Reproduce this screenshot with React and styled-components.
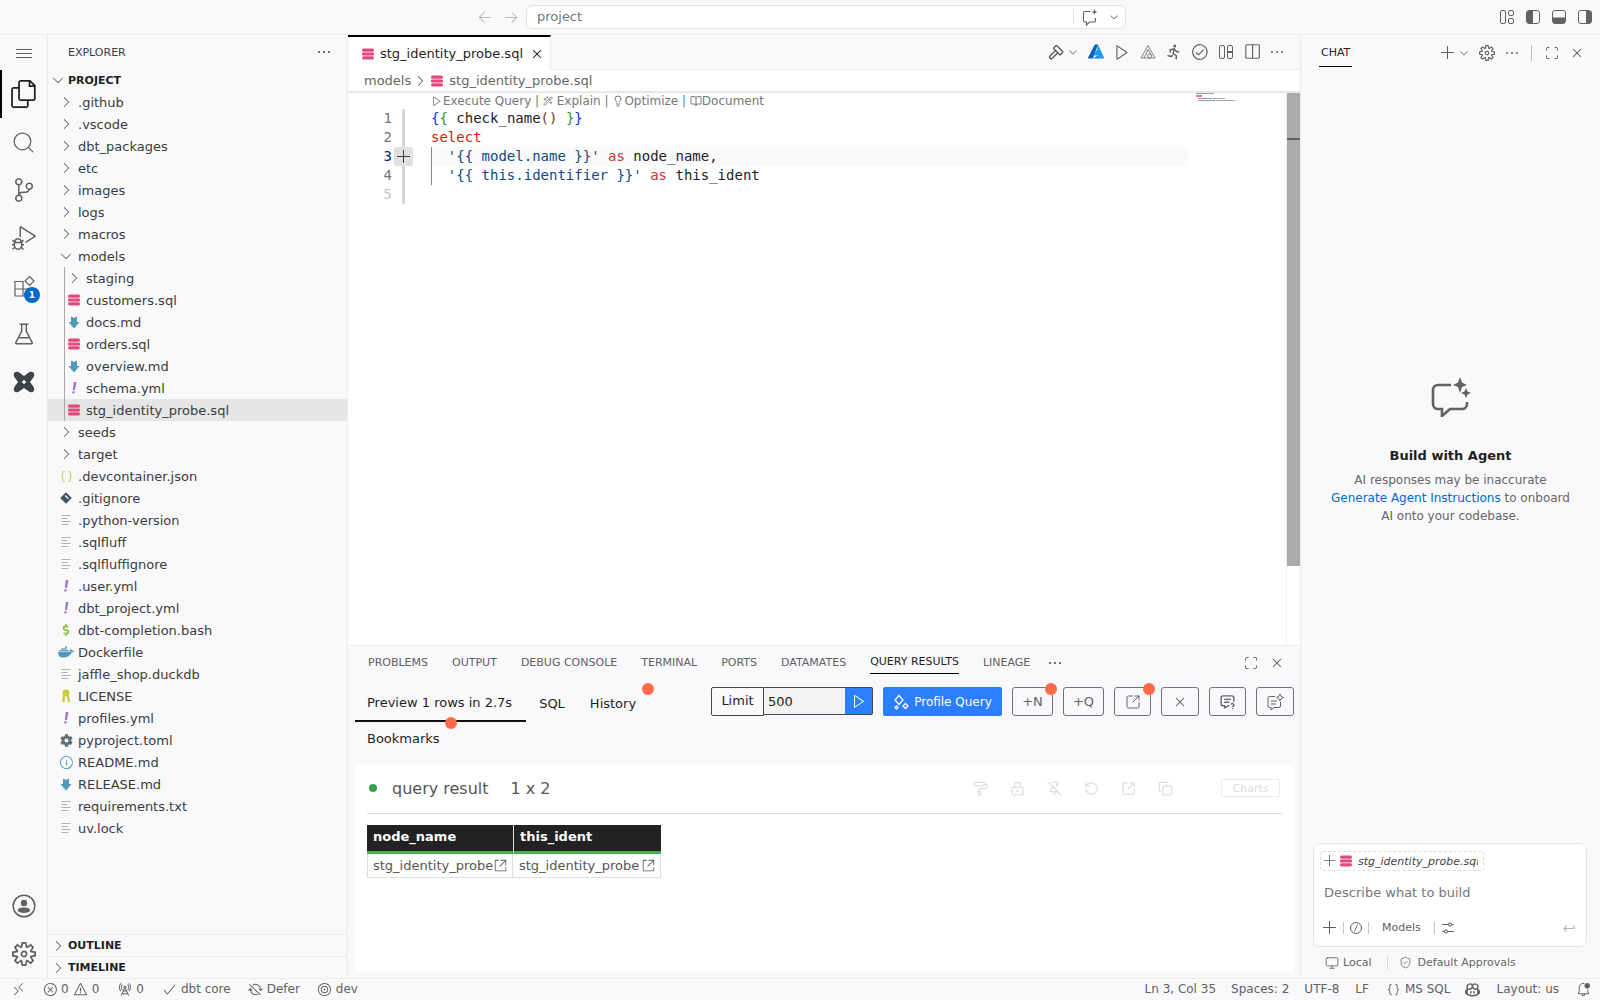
import styled, { createGlobalStyle } from "styled-components";
import {
  VscAdd, VscArrowLeft, VscArrowRight, VscBeaker, VscBellDot, VscCheck,
  VscChevronDown, VscChevronRight, VscClose, VscCopilot, VscDebugAlt, VscEllipsis, VscError,
  VscFiles, VscInfo, VscJson, VscMenu, VscNewline, VscPass, VscPlay, VscRadioTower, VscRemote,
  VscSettings, VscSettingsGear, VscSourceControl, VscSplitHorizontal, VscSyncIgnored, VscTarget, VscWarning,
  VscLinkExternal,
} from "react-icons/vsc";
import { FaCog, FaDocker, FaDollarSign } from "react-icons/fa";
import { TbRun, TbHammer, TbMessageQuestion } from "react-icons/tb";
import {
  BookOpen, Copy, Lightbulb, LockKeyhole, Monitor, PaintRoller, PinOff, RotateCcw, Search, ShieldCheck,
  SquareArrowOutUpRight, Wand2,
} from "lucide-react";

const Global = createGlobalStyle`
  html, body { margin: 0; height: 100%; background: #f9f9fc; }
  #root { height: 1000px; }
  * { box-sizing: border-box; }
  body { font-family: "DejaVu Sans", sans-serif; color: #3b3b3b; overflow: hidden; }
`;

const Shell = styled.div`
  display: flex;
  flex-direction: column;
  width: 1600px;
  height: 1000px;
`;

const TitleBar = styled.div`
  height: 35px;
  flex: none;
  display: flex;
  align-items: center;
  padding-left: 477px;
  border-bottom: 1px solid #ececf0;
`;

const NavArrows = styled.div`
  display: flex;
  gap: 10px;
  width: 49px;
  color: #b9b9bd;
  font-size: 16px;
  align-items: center;
`;

const CommandBox = styled.div`
  width: 600px;
  height: 24px;
  display: flex;
  align-items: center;
  padding: 0 0 1px 10px;
  background: #fff;
  border: 1px solid #e2e2e6;
  border-radius: 6px;
  font-size: 13px;
  color: #767676;
`;

const CommandActions = styled.div`
  margin-left: auto;
  display: flex;
  align-items: center;
  height: 16px;
  width: 52px;
  gap: 9px;
  border-left: 1px solid #e2e2e6;
  padding-left: 7px;
  color: #616161;
`;

const LayoutIcons = styled.div`
  margin-left: auto;
  display: flex;
  gap: 12px;
  padding-right: 8px;
  color: #616161;
`;

const Main = styled.div`
  flex: 1;
  display: flex;
  min-height: 0;
`;

const Activity = styled.nav`
  width: 48px;
  flex: none;
  display: flex;
  flex-direction: column;
  border-right: 1px solid #ececf0;
`;

const ActivityItem = styled.div`
  height: ${(p) => p.$h || 48}px;
  display: flex;
  align-items: center;
  justify-content: center;
  color: ${(p) => (p.$active ? "#1f1f1f" : "#616161")};
  font-size: ${(p) => p.$size || 24}px;
  position: relative;
  border-left: ${(p) => (p.$active ? "2px solid #000" : "none")};
  padding-right: ${(p) => (p.$active ? "2px" : "0")};
`;

const Spacer = styled.div`
  flex: 1;
`;

const Badge = styled.span`
  position: absolute;
  left: 24px;
  top: 25px;
  width: 16px;
  height: 16px;
  border-radius: 50%;
  background: #0069cc;
  color: #fff;
  font-size: 9px;
  font-weight: 700;
  display: flex;
  align-items: center;
  justify-content: center;
`;

const Sidebar = styled.aside`
  width: 300px;
  flex: none;
  display: flex;
  flex-direction: column;
  border-right: 1px solid #ececf0;
`;

const SideHead = styled.div`
  height: 34px;
  flex: none;
  display: flex;
  align-items: center;
  justify-content: space-between;
  padding: 0 15px 0 20px;
  font-size: 11px;
  color: #3b3b3b;
  svg { font-size: 16px; color: #444; }
`;

const Tree = styled.div`
  flex: 1;
`;

const Row = styled.div`
  height: 22px;
  display: flex;
  align-items: center;
  gap: 4px;
  padding-left: ${(p) => (p.$depth === 2 ? 18 : 10)}px;
  font-size: 13px;
  color: #3b3b3b;
  background: ${(p) => (p.$selected ? "#e6e6e6" : "transparent")};
`;

const RootRow = styled(Row)`
  padding-left: 2px;
  gap: 2px;
  font-size: 11px;
  font-weight: 700;
  color: #1f1f1f;
`;

const Nested = styled.div`
  position: relative;
  &::before {
    content: "";
    position: absolute;
    z-index: 1;
    left: 16px;
    top: 0;
    bottom: 0;
    width: 1px;
    background: #a8a8a8;
  }
`;

const IconBox = styled.span`
  width: 16px;
  height: 16px;
  flex: none;
  display: inline-flex;
  align-items: center;
  justify-content: center;
  color: ${(p) => p.$color || "#616161"};
  font-size: ${(p) => p.$size || 16}px;
`;

const Section = styled(RootRow)`
  border-top: 1px solid #ececf0;
  flex: none;
`;

const Center = styled.div`
  flex: 1;
  min-width: 0;
  display: flex;
  flex-direction: column;
`;

const TabBar = styled.div`
  height: 35px;
  flex: none;
  display: flex;
  align-items: stretch;
  justify-content: space-between;
  border-bottom: 1px solid #ececf0;
`;

const EditorTab = styled.div`
  width: 203px;
  display: flex;
  align-items: center;
  gap: 4px;
  padding-left: 12px;
  background: #fff;
  border-top: 2px solid #000;
  border-right: 1px solid #ececf0;
  margin-bottom: -1px;
  font-size: 13px;
  color: #1f1f1f;
  > svg { margin-left: 2px; font-size: 16px; }
`;

const EditorActions = styled.div`
  display: flex;
  align-items: center;
  gap: 8px;
  padding-right: 15px;
  color: #616161;
  font-size: 18px;
`;

const Crumbs = styled.div`
  height: 23px;
  flex: none;
  display: flex;
  align-items: center;
  padding-left: 16px;
  gap: 1px;
  background: #fff;
  border-bottom: 2px solid #e8e8e8;
  font-size: 13px;
  color: #666;
`;

const CrumbIcon = styled(IconBox)`
  margin: 0 3px 0 0;
`;

const EditorArea = styled.div`
  flex: 1;
  min-height: 0;
  display: flex;
  background: #fff;
`;

const CodeColumn = styled.div`
  width: 840px;
  flex: none;
`;

const Lens = styled.div`
  height: 16px;
  display: flex;
  align-items: center;
  padding-left: 83px;
  font-size: 12px;
  color: #777;
  white-space: pre;
`;

const Line = styled.div`
  height: 19px;
  display: flex;
  align-items: stretch;
`;

const LineNo = styled.div`
  width: 44px;
  text-align: right;
  font: 14px/19px "DejaVu Sans Mono", monospace;
  color: ${(p) => (p.$active ? "#0b216f" : p.$dim ? "#c4c4c4" : "#6e7681")};
`;

const Glyph = styled.div`
  width: 19px;
  margin-left: 2px;
  position: relative;
  flex: none;
  display: flex;
  align-items: center;
  justify-content: center;
  &::before {
    content: "";
    position: absolute;
    left: 8px;
    top: 0;
    bottom: 0;
    width: 3px;
    background: #d6d6d6;
  }
`;

const AddBox = styled.span`
  position: relative;
  width: 19px;
  height: 19px;
  border-radius: 3px;
  background: #e0e0e0;
  color: #3b3b3b;
  display: flex;
  align-items: center;
  justify-content: center;
  font-size: 16px;
`;

const Code = styled.div`
  flex: 1;
  padding-left: ${(p) => (p.$guide ? 0 : 18)}px;
  margin-left: ${(p) => (p.$guide ? 18 : 0)}px;
  box-shadow: ${(p) => (p.$guide ? "inset 1px 0 0 #8a8a8a" : "none")};
  background: ${(p) => (p.$active ? "#fafafa" : "transparent")};
  font: 14px/19px "DejaVu Sans Mono", monospace;
  color: #1f1f1f;
  white-space: pre;
`;

const Tok = styled.span`
  color: ${(p) => p.$c};
`;

const Minimap = styled.div`
  width: 98px;
  flex: none;
  padding: 0 0 0 7px;
  svg { display: block; }
`;

const Scroll = styled.div`
  width: 14px;
  flex: none;
  align-self: stretch;
  display: flex;
  flex-direction: column;
  background: #fff;
  border-left: 1px solid #f0f0f0;
`;

const Thumb = styled.div`
  height: 473px;
  background: #ababab;
  padding-top: 45px;
  &::before {
    content: "";
    display: block;
    height: 2px;
    background: #606060;
  }
`;

const Panel = styled.section`
  height: 333px;
  flex: none;
  display: flex;
  flex-direction: column;
  border-top: 1px solid #ececf0;
`;

const PanelTabs = styled.div`
  height: 29px;
  flex: none;
  display: flex;
  align-items: stretch;
  gap: 24px;
  padding: 0 15px 0 20px;
  font-size: 11px;
  color: #616161;
`;

const PanelTab = styled.div`
  display: flex;
  align-items: center;
  height: 28px;
  padding-top: 4px;
  color: ${(p) => (p.$active ? "#1f1f1f" : "#616161")};
  border-bottom: ${(p) => (p.$active ? "1px solid #000" : "none")};
`;

const PanelActions = styled.div`
  margin-left: auto;
  display: flex;
  align-items: center;
  padding-top: 4px;
  gap: 10px;
  font-size: 16px;
  color: #616161;
`;

const PanelMore = styled.div`
  display: flex;
  align-items: center;
  padding-top: 4px;
  margin-left: -7px;
  font-size: 16px;
  color: #444;
`;

const QueryHead = styled.div`
  height: 90px;
  flex: none;
  display: flex;
  justify-content: space-between;
  padding: 9px 6px 0 7px;
`;

const QueryTabs = styled.div`
  width: 320px;
  display: flex;
  flex-wrap: wrap;
  align-content: flex-start;
`;

const QueryTab = styled.div`
  position: relative;
  height: ${(p) => (p.$wrap ? 32 : 38)}px;
  padding: 0 ${(p) => (p.$active ? 14 : 12)}px 0 12px;
  margin-right: 1px;
  display: flex;
  align-items: center;
  font-size: 13px;
  color: #1f1f1f;
  border-bottom: ${(p) => (p.$active ? "2px solid #111" : "none")};
`;

const Dot = styled.span`
  position: absolute;
  z-index: 2;
  width: 12px;
  height: 12px;
  border-radius: 50%;
  background: #ff6b4a;
  left: ${(p) => p.$left};
  right: ${(p) => p.$right};
  top: ${(p) => p.$top};
  bottom: ${(p) => p.$bottom};
`;

const QueryTools = styled.div`
  display: flex;
  align-items: flex-start;
  gap: 10px;
  margin-top: 3px;
`;

const LimitGroup = styled.div`
  display: flex;
  height: 29px;
  margin-right: 0;
`;

const LimitLabel = styled.div`
  width: 53px;
  height: 29px;
  display: flex;
  align-items: center;
  justify-content: center;
  padding-bottom: 2px;
  font-size: 13px;
  color: #1f1f1f;
  background: #fafafa;
  border: 1px solid #45494e;
  border-radius: 2px 0 0 2px;
`;

const LimitInput = styled.div`
  width: 81px;
  height: 28px;
  display: flex;
  align-items: center;
  padding-left: 4px;
  font-size: 13px;
  color: #222;
  background: #f3f3f5;
  border: 1px solid #45494e;
  border-left: none;
  border-right: none;
`;

const RunButton = styled.div`
  width: 28px;
  height: 28px;
  display: flex;
  align-items: center;
  justify-content: center;
  background: #2b7fff;
  color: #fff;
  font-size: 16px;
  border: 1px solid #45494e;
  border-left: none;
  border-radius: 0 2px 2px 0;
`;

const ProfileButton = styled.div`
  width: 119px;
  height: 29px;
  display: flex;
  align-items: center;
  justify-content: center;
  gap: 5px;
  background: #2b7fff;
  color: #fff;
  font-size: 12px;
  border-radius: 2px;
`;

const ToolButton = styled.div`
  position: relative;
  width: ${(p) => p.$w}px;
  height: 29px;
  display: flex;
  align-items: center;
  justify-content: center;
  border: 1px solid #6f747a;
  border-radius: 3px;
  font-size: 13px;
  color: #5e646a;
`;

const Card = styled.div`
  flex: 1;
  min-height: 0;
  margin: 0 6px 6px 7px;
  padding: 0 12px;
  background: #fff;
`;

const CardHead = styled.div`
  height: 49px;
  display: flex;
  align-items: center;
  border-bottom: 1px solid #dcdcdc;
  padding-bottom: 2px;
`;

const StatusDot = styled.span`
  width: 8px;
  height: 8px;
  margin-left: 2px;
  border-radius: 50%;
  background: #2ea24f;
`;

const CardTitle = styled.span`
  margin-left: 15px;
  font-size: 16px;
  color: #555;
`;

const CardCount = styled.span`
  margin-left: 22px;
  font-size: 16px;
  color: #555;
`;

const CardTools = styled.div`
  margin-left: auto;
  display: flex;
  align-items: center;
  gap: 22px;
  color: #dedede;
`;

const ChartsButton = styled.div`
  width: 59px;
  height: 18px;
  margin-left: 48px;
  margin-right: 2px;
  display: flex;
  align-items: center;
  justify-content: center;
  border: 1px solid #ececec;
  border-radius: 2px;
  font-size: 11px;
  color: #dcdcdc;
`;

const Table = styled.div`
  display: grid;
  grid-template-columns: 146px 148px;
  width: 294px;
  margin-top: 11px;
`;

const HeadCell = styled.div`
  height: 29px;
  display: flex;
  align-items: center;
  padding: 0 0 3px 6px;
  background: #222;
  color: #fff;
  font-size: 13px;
  font-weight: 700;
  border-bottom: 3px solid #4caf50;
  border-left: ${(p) => (p.$next ? "1px solid #ddd" : "none")};
`;

const BodyCell = styled.div`
  height: 24px;
  display: flex;
  align-items: center;
  gap: ${(p) => (p.$next ? 3 : 1)}px;
  padding-left: ${(p) => (p.$next ? 6 : 5)}px;
  font-size: 13px;
  color: #555;
  border: 1px solid #ddd;
  border-top: none;
  border-left: ${(p) => (p.$next ? "none" : "1px solid #ddd")};
`;

const Chat = styled.aside`
  width: 300px;
  flex: none;
  display: flex;
  flex-direction: column;
  border-left: 1px solid #ececf0;
`;

const ChatHead = styled.div`
  height: 35px;
  flex: none;
  display: flex;
  align-items: center;
  padding: 0 15px 0 18px;
  color: #616161;
  font-size: 16px;
`;

const ChatTitle = styled.div`
  height: 27px;
  padding: 6px 2px 0;
  margin-top: 1px;
  border-bottom: 1px solid #000;
  font-size: 11px;
  color: #1f1f1f;
`;

const ChatActions = styled.div`
  margin-left: auto;
  display: flex;
  align-items: center;
  gap: 9px;
`;

const ChatRule = styled.span`
  width: 1px;
  height: 16px;
  margin: 0 3px 0 2px;
  background: #bdbdbd;
`;

const EmptyState = styled.div`
  flex: 1;
  display: flex;
  flex-direction: column;
  align-items: center;
  justify-content: center;
  padding-bottom: 11px;
  font-size: 12px;
  line-height: 18px;
  color: #666;
  text-align: center;
`;

const EmptyTitle = styled.div`
  margin: 30px 0 6px;
  font-size: 13px;
  font-weight: 700;
  color: #1f1f1f;
`;

const Link = styled.span`
  color: #0069cc;
`;

const InputBox = styled.div`
  height: 104px;
  margin: 0 13px 0 12px;
  flex: none;
  display: flex;
  flex-direction: column;
  padding: 7px 6px 0;
  background: #fff;
  border: 1px solid #e6e6ea;
  border-radius: 7px;
`;

const Chip = styled.div`
  width: 164px;
  height: 20px;
  display: flex;
  align-items: center;
  padding-left: 1px;
  border: 1px dashed #dcdcdc;
  border-radius: 3px;
  font-size: 11px;
  font-style: italic;
  color: #444;
  overflow: hidden;
  white-space: nowrap;
`;

const ChipName = styled.span`
  margin-left: 4px;
  width: 120px;
  overflow: hidden;
`;

const Placeholder = styled.div`
  margin: 14px 0 0 4px;
  font-size: 13px;
  color: #777;
`;

const InputFoot = styled.div`
  margin-top: auto;
  height: 34px;
  padding: 0 0 3px 2px;
  display: flex;
  align-items: center;
  gap: 3px;
  font-size: 11px;
  color: #616161;
`;

const ModelsLabel = styled.span`
  margin: 0 8px;
`;

const Bar = styled.span`
  width: 1px;
  height: 12px;
  margin: 0 ${(p) => p.$gap ?? 2}px;
  background: #c9c9c9;
`;

const ReturnIcon = styled.span`
  margin-left: auto;
  display: flex;
  font-size: 18px;
  color: #b5b5b5;
  margin-right: 2px;
`;

const ChatFoot = styled.div`
  height: 31px;
  flex: none;
  display: flex;
  align-items: center;
  padding: 0 0 0 24px;
  font-size: 11px;
  color: #666;
  svg { color: #666; flex: none; }
`;

const FootLabel = styled.span`
  margin-left: ${(p) => p.$ml || 4}px;
`;

const FootRule = styled.span`
  width: 1px;
  height: 14px;
  margin: 0 11px 0 15px;
  background: #d8d8d8;
`;

const StatusBar = styled.footer`
  height: 22px;
  flex: none;
  display: flex;
  align-items: center;
  padding: 0 9px 1px 11px;
  border-top: 1px solid #ececf0;
  font-size: 12px;
  color: #616161;
`;

const StatusItem = styled.span`
  display: inline-flex;
  align-items: center;
  gap: ${(p) => p.$gap ?? 4}px;
  margin-left: ${(p) => p.$ml || 0}px;
  svg { font-size: 15px; flex: none; }
`;

const DbIcon = () => (
  <svg width="16" height="16" viewBox="0 0 16 16" fill="#e5487c">
    <rect x="2" y="2.6" width="12" height="3.2" rx="1.6" />
    <rect x="2" y="6.4" width="12" height="3.2" rx="1.2" />
    <rect x="2" y="10.2" width="12" height="3.2" rx="1.6" />
  </svg>
);

const MdIcon = () => (
  <svg width="16" height="16" viewBox="0 0 16 16" fill="#519aba">
    <path d="M5 2.5l3 1.6 3-1.6V8h2.6L8 14.5 2.4 8H5z" />
  </svg>
);

const YmlIcon = () => (
  <svg width="16" height="16" viewBox="0 0 16 16" fill="#a074c4">
    <path d="M7.8 2h2.6L9 10H6.9zM6.6 11.2h2.1l-.3 2.4H6.200z" />
  </svg>
);

const LinesIcon = () => (
  <svg width="16" height="16" viewBox="0 0 16 16" stroke="#b0b0b0" fill="none" strokeWidth="1">
    <path d="M3.5 3.5h9M3.5 6.5h6M3.5 9.5h9M3.5 12.5h7" />
  </svg>
);

const GitIcon = () => (
  <svg width="16" height="16" viewBox="0 0 16 16">
    <path d="M8 2.2L13.8 8 8 13.8 2.2 8z" fill="#41535b" />
    <path d="M7 5.5l3.5 3.2" stroke="#f9f9fc" strokeWidth="1.2" />
  </svg>
);

const KeyIcon = () => (
  <svg width="16" height="16" viewBox="0 0 16 16" fill="#cbcb41">
    <circle cx="8" cy="5" r="3.6" />
    <path d="M5 7.5h2.2L6.4 15 4 13.2zM8.8 7.5H11l1 5.7-2 1.8z" />
  </svg>
);

const DbtLogo = () => (
  <svg width="24" height="24" viewBox="0 0 24 24">
    <path fill="#3e4246" d="M2.6 2.6c1.3-1.3 3.3-1 4.9.1L12 6l4.5-3.3c1.6-1.1 3.6-1.4 4.9-.1s1 3.3-.1 4.9L18 12l3.3 4.5c1.1 1.6 1.4 3.6.1 4.9s-3.3 1-4.9-.1L12 18l-4.5 3.3c-1.6 1.1-3.6 1.4-4.9.1s-1-3.3.1-4.9L6 12 2.7 7.5c-1.1-1.6-1.4-3.6-.1-4.9z" />
    <path fill="#f9f9fc" d="M12 9.8l2.2 2.2-2.2 2.2L9.8 12z" />
  </svg>
);

const ExtensionsIcon = () => (
  <svg width="24" height="24" viewBox="0 0 24 24" fill="none" stroke="currentColor" strokeWidth="1.2">
    <path d="M3 7.500h8v7.500H3zM3 15h8v7H3zM11 15h7.500v7H11zM17.500 2.500l4.500 4.500-4.500 4.500L13 7z" />
  </svg>
);

const AccountIcon = () => (
  <svg width="24" height="24" viewBox="0 0 24 24">
    <circle cx="12" cy="12" r="10.800" fill="none" stroke="currentColor" strokeWidth="1.500" />
    <circle cx="12" cy="9" r="3.200" fill="currentColor" />
    <path d="M5.800 17c0-2.500 2-3.500 6.200-3.500s6.200 1 6.200 3.500c-1.500 1.300-3.600 2-6.200 2s-4.700-.7-6.200-2z" fill="currentColor" />
  </svg>
);

const AzureIcon = () => (
  <svg width="18" height="18" viewBox="0 0 18 18">
    <path d="M7.800 1.500h3.400L5.800 15.500H.6z" fill="#0a5fb8" />
    <path d="M11 1.500l6.400 14h-5l-1.400-3H7l2-4.500 1-1z" fill="#1a9bec" />
    <path d="M5.800 15.500l5.200-3 1.400 3z" fill="#0a78d4" />
  </svg>
);

const TriangleIcon = () => (
  <svg width="18" height="18" viewBox="0 0 18 18" fill="none" stroke="#757575" strokeWidth="0.9">
    <path d="M9 2.500L2 15h14zM9 6.500l-4 8.500M9 6.500l3.500 6" />
    <circle cx="10.500" cy="13" r="2" />
  </svg>
);

const PanelsIcon = () => (
  <svg width="18" height="18" viewBox="0 0 18 18" fill="none" stroke="currentColor">
    <rect x="2.500" y="2.500" width="5" height="13" rx="1.500" />
    <rect x="10.500" y="2.500" width="5" height="13" rx="1.500" />
    <path d="M10.500 9h5" strokeWidth="2" />
  </svg>
);

const CornersIcon = () => (
  <svg width="16" height="16" viewBox="0 0 16 16" fill="none" stroke="currentColor">
    <path d="M2.500 5.500v-2a1 1 0 0 1 1-1h2M10.500 2.500h2a1 1 0 0 1 1 1v2M13.500 10.500v2a1 1 0 0 1-1 1h-2M5.500 13.500h-2a1 1 0 0 1-1-1v-2" />
  </svg>
);

const LayoutCustom = () => (
  <svg width="14" height="14" viewBox="0 0 14 14" fill="none" stroke="currentColor">
    <rect x="0.5" y="0.5" width="5" height="13" rx="1.5" />
    <rect x="8.5" y="0.5" width="5" height="5" rx="1.5" />
    <rect x="8.5" y="8.5" width="5" height="5" rx="1.5" />
  </svg>
);

const LayoutPart = ({ d }) => (
  <svg width="14" height="14" viewBox="0 0 14 14" fill="none" stroke="currentColor">
    <rect x="0.5" y="0.5" width="13" height="13" rx="2.5" />
    <path d={d} fill="currentColor" stroke="none" />
  </svg>
);

const SparkBubble = () => (
  <svg width="42" height="40" viewBox="0 0 42 40" fill="none">
    <path d="M21 8H8a5 5 0 0 0-5 5v14a5 5 0 0 0 5 5h4v7l8-7h12a5 5 0 0 0 5-5v-2" stroke="#616161" strokeWidth="2.6" />
    <path d="M30 0l2 5.500L37 8l-5 2-2 6-2-6-5-2 5-2.500z" fill="#616161" />
    <path d="M36 11l1.500 3.500L41 16l-3.500 1.500L36 21l-1.500-3.500L31 16l3.500-1.500z" fill="#616161" />
  </svg>
);

const SmallSpark = () => (
  <svg width="18" height="18" viewBox="0 0 18 18" fill="none" stroke="currentColor">
    <path d="M9 3.500H4A1.500 1.500 0 0 0 2.500 5v7.500A1.500 1.500 0 0 0 4 14h1.500v3l3-3H13a1.500 1.500 0 0 0 1.500-1.500V10" strokeWidth="1.100" />
    <path d="M13.500 1l.8 2.200 2.200.8-2.200.8-.8 2.200-.8-2.200-2.200-.8 2.200-.8z" fill="currentColor" stroke="none" />
  </svg>
);

const Diamonds = () => (
  <svg width="16" height="16" viewBox="0 0 16 16" fill="none" stroke="#fff" strokeWidth="1.300">
    <path d="M6 1.500L10 6 6 10.500 2 6zM12.500 9.500L15 12l-2.500 2.500L10 12zM3.500 12L5 13.500 3.500 15 2 13.500z" />
  </svg>
);

const ChatStar = () => (
  <svg width="18" height="18" viewBox="0 0 18 18" fill="none" stroke="currentColor">
    <path d="M9 3.500H3.500A1.500 1.500 0 0 0 2 5v8a1.500 1.500 0 0 0 1.500 1.500H5V17l3-2.500h5a1.500 1.500 0 0 0 1.500-1.500V9M5 8h6M5 11h5" />
    <path d="M14 1l1.100 2.400L17.500 4.500l-2.400 1.100L14 8l-1.100-2.400-2.400-1.100 2.400-1.100z" />
  </svg>
);

const SlashCircle = () => (
  <svg width="14" height="14" viewBox="0 0 14 14" fill="none" stroke="currentColor">
    <circle cx="7" cy="7" r="5.500" />
    <path d="M8.500 3.500l-3 7" />
  </svg>
);

const MiniMapDrawing = () => (
  <svg width="44" height="8" viewBox="0 0 44 8">
    <rect x="1" y="0" width="18" height="1" fill="#9a9aa8" />
    <rect x="1" y="2" width="6" height="2" fill="#e08080" />
    <rect x="3" y="5" width="14" height="1" fill="#8a9ab8" />
    <rect x="18" y="5" width="12" height="1" fill="#aaaaaa" />
    <rect x="3" y="7" width="17" height="1" fill="#8a9ab8" />
    <rect x="21" y="7" width="19" height="1" fill="#aaaaaa" />
  </svg>
);

const TREE_TOP = ["github", "vscode", "dbt_packages", "etc", "images", "logs", "macros"];
const NESTED = [
  ["customers.sql", <DbIcon />],
  ["docs.md", <MdIcon />],
  ["orders.sql", <DbIcon />],
  ["overview.md", <MdIcon />],
  ["schema.yml", <YmlIcon />],
];
const FILES = [
  [".devcontainer.json", <IconBox $color="#cbcb41" $size={15}><VscJson /></IconBox>],
  [".gitignore", <GitIcon />],
  [".python-version", <LinesIcon />],
  [".sqlfluff", <LinesIcon />],
  [".sqlfluffignore", <LinesIcon />],
  [".user.yml", <YmlIcon />],
  ["dbt_project.yml", <YmlIcon />],
  ["dbt-completion.bash", <IconBox $color="#8dc149" $size={12}><FaDollarSign /></IconBox>],
  ["Dockerfile", <IconBox $color="#519aba" $size={16}><FaDocker /></IconBox>],
  ["jaffle_shop.duckdb", <LinesIcon />],
  ["LICENSE", <KeyIcon />],
  ["profiles.yml", <YmlIcon />],
  ["pyproject.toml", <IconBox $color="#5f6f77" $size={13}><FaCog /></IconBox>],
  ["README.md", <IconBox $color="#519aba" $size={15}><VscInfo /></IconBox>],
  ["RELEASE.md", <MdIcon />],
  ["requirements.txt", <LinesIcon />],
  ["uv.lock", <LinesIcon />],
];

const Chevron = ({ open }) => (
  <IconBox>{open ? <VscChevronDown /> : <VscChevronRight />}</IconBox>
);

const BLUE = "#0431fa";
const GREEN = "#319331";
const RED = "#cd3131";
const STR = "#0f4a85";

const Mono = ({ name }) => <Tok $c={STR}>{name}</Tok>;

const CODE = [
  <>
    <Tok $c={BLUE}>{"{"}</Tok><Tok $c={GREEN}>{"{"}</Tok> check_name<Tok $c="#7b3814">()</Tok> <Tok $c={GREEN}>{"}"}</Tok><Tok $c={BLUE}>{"}"}</Tok>
  </>,
  <Tok $c="#e51400">select</Tok>,
  <>
    {"  "}<Mono name="'{{ model.name }}'" /> <Tok $c={RED}>as</Tok> node_name,
  </>,
  <>
    {"  "}<Mono name="'{{ this.identifier }}'" /> <Tok $c={RED}>as</Tok> this_ident
  </>,
  "",
];

export default function App() {
  return (
    <Shell>
      <Global />
      <TitleBar>
        <NavArrows>
          <VscArrowLeft />
          <VscArrowRight />
        </NavArrows>
        <CommandBox>
          project
          <CommandActions>
            <SmallSpark />
            <VscChevronDown size={12} />
          </CommandActions>
        </CommandBox>
        <LayoutIcons>
          <LayoutCustom />
          <LayoutPart d="M2.500 1H7v12H2.500A1.500 1.500 0 0 1 1 11.500v-9A1.500 1.500 0 0 1 2.500 1z" />
          <LayoutPart d="M1 7.500h12v4a1.500 1.500 0 0 1-1.500 1.500h-9A1.500 1.500 0 0 1 1 11.500z" />
          <LayoutPart d="M8 1h3.500A1.500 1.500 0 0 1 13 2.500v9a1.500 1.500 0 0 1-1.500 1.500H8z" />
        </LayoutIcons>
      </TitleBar>
      <Main>
        <Activity>
          <ActivityItem $h={35} $size={16}><VscMenu /></ActivityItem>
          <ActivityItem $active $size={28}><VscFiles /></ActivityItem>
          <ActivityItem><Search size={25} strokeWidth={1.2} /></ActivityItem>
          <ActivityItem><VscSourceControl /></ActivityItem>
          <ActivityItem><VscDebugAlt /></ActivityItem>
          <ActivityItem><ExtensionsIcon /><Badge>1</Badge></ActivityItem>
          <ActivityItem><VscBeaker /></ActivityItem>
          <ActivityItem><DbtLogo /></ActivityItem>
          <Spacer />
          <ActivityItem><AccountIcon /></ActivityItem>
          <ActivityItem><VscSettingsGear /></ActivityItem>
        </Activity>
        <Sidebar>
          <SideHead>
            EXPLORER
            <VscEllipsis />
          </SideHead>
          <Tree>
            <RootRow><Chevron open />PROJECT</RootRow>
            {TREE_TOP.map((name) => (
              <Row key={name}>
                <Chevron />
                {name === "github" || name === "vscode" ? `.${name}` : name}
              </Row>
            ))}
            <Row><Chevron open />models</Row>
            <Nested>
              <Row $depth={2}><Chevron />staging</Row>
              {NESTED.map(([name, icon]) => (
                <Row $depth={2} key={name}><IconBox>{icon}</IconBox>{name}</Row>
              ))}
              <Row $depth={2} $selected><IconBox><DbIcon /></IconBox>stg_identity_probe.sql</Row>
            </Nested>
            <Row><Chevron />seeds</Row>
            <Row><Chevron />target</Row>
            {FILES.map(([name, icon]) => (
              <Row key={name}><IconBox>{icon}</IconBox>{name}</Row>
            ))}
          </Tree>
          <Section><Chevron />OUTLINE</Section>
          <Section><Chevron />TIMELINE</Section>
        </Sidebar>
        <Center>
          <TabBar>
            <EditorTab>
              <IconBox><DbIcon /></IconBox>
              stg_identity_probe.sql
              <VscClose />
            </EditorTab>
            <EditorActions>
              <TbHammer />
              <VscChevronDown size={12} style={{ marginLeft: -6 }} />
              <AzureIcon />
              <VscPlay />
              <TriangleIcon />
              <TbRun />
              <VscPass />
              <PanelsIcon />
              <VscSplitHorizontal />
              <VscEllipsis size={16} />
            </EditorActions>
          </TabBar>
          <Crumbs>
            models
            <IconBox><VscChevronRight /></IconBox>
            <CrumbIcon><DbIcon /></CrumbIcon>
            stg_identity_probe.sql
          </Crumbs>
          <EditorArea>
            <CodeColumn>
              <Lens>
                <VscPlay size={12} />Execute Query | <Wand2 size={10} /> Explain | <Lightbulb size={12} />Optimize | <BookOpen size={12} />Document
              </Lens>
              {CODE.map((line, i) => (
                <Line key={i}>
                  <LineNo $active={i === 2} $dim={i === 4}>{i + 1}</LineNo>
                  <Glyph>{i === 2 && <AddBox><VscAdd /></AddBox>}</Glyph>
                  <Code $active={i === 2} $guide={i === 2 || i === 3}>{line}</Code>
                </Line>
              ))}
            </CodeColumn>
            <Minimap><MiniMapDrawing /></Minimap>
            <Scroll><Thumb /></Scroll>
          </EditorArea>
          <Panel>
            <PanelTabs>
              <PanelTab>PROBLEMS</PanelTab>
              <PanelTab>OUTPUT</PanelTab>
              <PanelTab>DEBUG CONSOLE</PanelTab>
              <PanelTab>TERMINAL</PanelTab>
              <PanelTab>PORTS</PanelTab>
              <PanelTab>DATAMATES</PanelTab>
              <PanelTab $active>QUERY RESULTS</PanelTab>
              <PanelTab>LINEAGE</PanelTab>
              <PanelMore><VscEllipsis /></PanelMore>
              <PanelActions>
                <CornersIcon />
                <VscClose />
              </PanelActions>
            </PanelTabs>
            <QueryHead>
              <QueryTabs>
                <QueryTab $active>
                  Preview 1 rows in 2.7s
                  <Dot $left="90px" $bottom="-9px" />
                </QueryTab>
                <QueryTab>SQL</QueryTab>
                <QueryTab>
                  History
                  <Dot $right="-6px" $top="-1px" />
                </QueryTab>
                <QueryTab $wrap>Bookmarks</QueryTab>
              </QueryTabs>
              <QueryTools>
                <LimitGroup>
                  <LimitLabel>Limit</LimitLabel>
                  <LimitInput>500</LimitInput>
                  <RunButton><VscPlay /></RunButton>
                </LimitGroup>
                <ProfileButton><Diamonds />Profile Query</ProfileButton>
                <ToolButton $w={41}>+N<Dot $right="-5px" $top="-5px" /></ToolButton>
                <ToolButton $w={41}>+Q</ToolButton>
                <ToolButton $w={37}>
                  <SquareArrowOutUpRight size={16} strokeWidth={1.5} />
                  <Dot $right="-5px" $top="-5px" />
                </ToolButton>
                <ToolButton $w={38}><VscClose size={16} /></ToolButton>
                <ToolButton $w={37}><TbMessageQuestion size={17} /></ToolButton>
                <ToolButton $w={38}><ChatStar /></ToolButton>
              </QueryTools>
            </QueryHead>
            <Card>
              <CardHead>
                <StatusDot />
                <CardTitle>query result</CardTitle>
                <CardCount>1 x 2</CardCount>
                <CardTools>
                  <PaintRoller size={15} />
                  <LockKeyhole size={15} />
                  <PinOff size={15} />
                  <RotateCcw size={15} />
                  <SquareArrowOutUpRight size={15} />
                  <Copy size={15} />
                </CardTools>
                <ChartsButton>Charts</ChartsButton>
              </CardHead>
              <Table>
                <HeadCell>node_name</HeadCell>
                <HeadCell $next>this_ident</HeadCell>
                <BodyCell>stg_identity_probe<VscLinkExternal size={13} /></BodyCell>
                <BodyCell $next>stg_identity_probe<VscLinkExternal size={13} /></BodyCell>
              </Table>
            </Card>
          </Panel>
        </Center>
        <Chat>
          <ChatHead>
            <ChatTitle>CHAT</ChatTitle>
            <ChatActions>
              <VscAdd />
              <VscChevronDown size={12} style={{ marginLeft: -7 }} />
              <VscSettingsGear />
              <VscEllipsis />
              <ChatRule />
              <CornersIcon />
              <VscClose />
            </ChatActions>
          </ChatHead>
          <EmptyState>
            <SparkBubble />
            <EmptyTitle>Build with Agent</EmptyTitle>
            AI responses may be inaccurate
            <div><Link>Generate Agent Instructions</Link> to onboard</div>
            AI onto your codebase.
          </EmptyState>
          <InputBox>
            <Chip>
              <IconBox $size={14}><VscAdd /></IconBox>
              <IconBox><DbIcon /></IconBox>
              <ChipName>stg_identity_probe.sql</ChipName>
            </Chip>
            <Placeholder>Describe what to build</Placeholder>
            <InputFoot>
              <IconBox><VscAdd /></IconBox>
              <Bar />
              <SlashCircle />
              <Bar />
              <ModelsLabel>Models</ModelsLabel>
              <Bar />
              <IconBox><VscSettings /></IconBox>
              <ReturnIcon><VscNewline /></ReturnIcon>
            </InputFoot>
          </InputBox>
          <ChatFoot>
            <Monitor size={14} strokeWidth={1.5} />
            <FootLabel>Local</FootLabel>
            <FootRule />
            <ShieldCheck size={13} strokeWidth={1.5} />
            <FootLabel $ml={6}>Default Approvals</FootLabel>
          </ChatFoot>
        </Chat>
      </Main>
      <StatusBar>
        <StatusItem><VscRemote /></StatusItem>
        <StatusItem $ml={17} $gap={3}><VscError />0</StatusItem>
        <StatusItem $ml={4} $gap={4}><VscWarning />0</StatusItem>
        <StatusItem $ml={18}><VscRadioTower />0</StatusItem>
        <StatusItem $ml={18}><VscCheck />dbt core</StatusItem>
        <StatusItem $ml={17}><VscSyncIgnored />Defer</StatusItem>
        <StatusItem $ml={17}><VscTarget />dev</StatusItem>
        <Spacer />
        <StatusItem>Ln 3, Col 35</StatusItem>
        <StatusItem $ml={15}>Spaces: 2</StatusItem>
        <StatusItem $ml={15}>UTF-8</StatusItem>
        <StatusItem $ml={16}>LF</StatusItem>
        <StatusItem $ml={17}><VscJson />MS SQL</StatusItem>
        <StatusItem $ml={15}><VscCopilot /></StatusItem>
        <StatusItem $ml={16}>Layout: us</StatusItem>
        <StatusItem $ml={17}><VscBellDot /></StatusItem>
      </StatusBar>
    </Shell>
  );
}
